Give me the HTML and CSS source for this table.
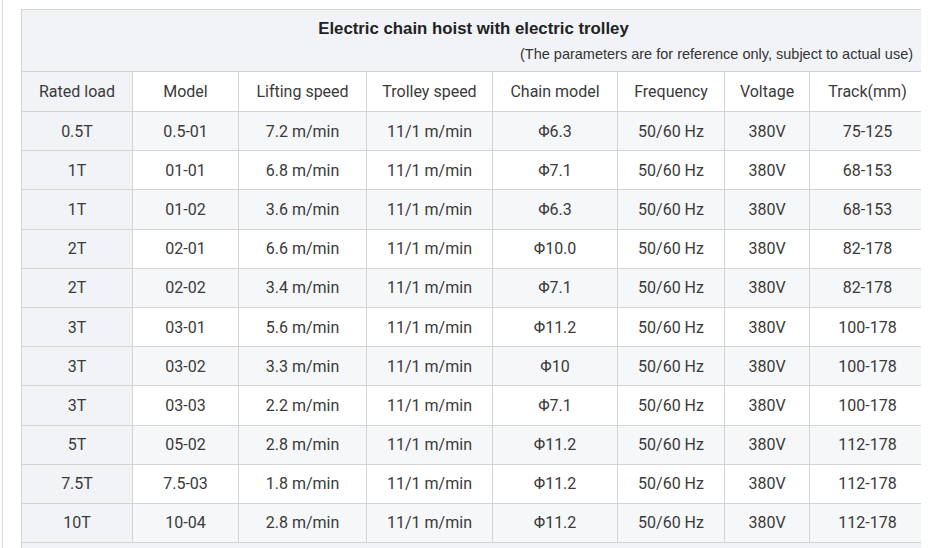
FILE: index.html
```html
<!DOCTYPE html>
<html>
<head>
<meta charset="utf-8">
<link rel="stylesheet" href="styles.css">
</head>
<body>
<div class="frame">
  <div class="clip">
    <table class="spec">
      <colgroup>
        <col class="c1"><col class="c2"><col class="c3"><col class="c4"><col class="c5"><col class="c6"><col class="c7"><col class="c8">
      </colgroup>
      <thead>
        <tr class="title-row">
          <th colspan="8">
            <div class="title">Electric chain hoist with electric trolley</div>
            <div class="subtitle">(The parameters are for reference only, subject to actual use)</div>
          </th>
        </tr>
        <tr class="head-row">
          <th class="first">Rated load</th><td>Model</td><td>Lifting speed</td><td>Trolley speed</td><td>Chain model</td><td>Frequency</td><td>Voltage</td><td>Track(mm)</td>
        </tr>
      </thead>
      <tbody>
        <tr class="odd"><th class="first">0.5T</th><td>0.5-01</td><td>7.2 m/min</td><td>11/1 m/min</td><td>Φ6.3</td><td>50/60 Hz</td><td>380V</td><td>75-125</td></tr>
        <tr><th class="first">1T</th><td>01-01</td><td>6.8 m/min</td><td>11/1 m/min</td><td>Φ7.1</td><td>50/60 Hz</td><td>380V</td><td>68-153</td></tr>
        <tr class="odd"><th class="first">1T</th><td>01-02</td><td>3.6 m/min</td><td>11/1 m/min</td><td>Φ6.3</td><td>50/60 Hz</td><td>380V</td><td>68-153</td></tr>
        <tr><th class="first">2T</th><td>02-01</td><td>6.6 m/min</td><td>11/1 m/min</td><td>Φ10.0</td><td>50/60 Hz</td><td>380V</td><td>82-178</td></tr>
        <tr class="odd"><th class="first">2T</th><td>02-02</td><td>3.4 m/min</td><td>11/1 m/min</td><td>Φ7.1</td><td>50/60 Hz</td><td>380V</td><td>82-178</td></tr>
        <tr><th class="first">3T</th><td>03-01</td><td>5.6 m/min</td><td>11/1 m/min</td><td>Φ11.2</td><td>50/60 Hz</td><td>380V</td><td>100-178</td></tr>
        <tr class="odd"><th class="first">3T</th><td>03-02</td><td>3.3 m/min</td><td>11/1 m/min</td><td>Φ10</td><td>50/60 Hz</td><td>380V</td><td>100-178</td></tr>
        <tr><th class="first">3T</th><td>03-03</td><td>2.2 m/min</td><td>11/1 m/min</td><td>Φ7.1</td><td>50/60 Hz</td><td>380V</td><td>100-178</td></tr>
        <tr class="odd"><th class="first">5T</th><td>05-02</td><td>2.8 m/min</td><td>11/1 m/min</td><td>Φ11.2</td><td>50/60 Hz</td><td>380V</td><td>112-178</td></tr>
        <tr><th class="first">7.5T</th><td>7.5-03</td><td>1.8 m/min</td><td>11/1 m/min</td><td>Φ11.2</td><td>50/60 Hz</td><td>380V</td><td>112-178</td></tr>
        <tr class="odd"><th class="first">10T</th><td>10-04</td><td>2.8 m/min</td><td>11/1 m/min</td><td>Φ11.2</td><td>50/60 Hz</td><td>380V</td><td>112-178</td></tr>
        <tr class="foot"><td colspan="8"></td></tr>
      </tbody>
    </table>
  </div>
</div>
</body>
</html>
```

FILE: styles.css
```css
html, body {
  margin: 0;
  padding: 0;
  background: #ffffff;
  overflow: hidden;
}
.frame {
  margin-left: 2px;
  border-left: 1px solid #dcdcdc;
  height: 548px;
  box-sizing: border-box;
  padding: 9px 0 0 18px;
}
.clip {
  width: 900px;
  overflow: hidden;
}
.spec {
  width: 904px;
  table-layout: fixed;
  border-collapse: collapse;
  font-family: Roboto, "Liberation Sans", sans-serif;
  font-size: 16px;
  color: #3a3a3a;
}
.c1 { width: 111px; }
.c2 { width: 106px; }
.c3 { width: 128px; }
.c4 { width: 126px; }
.c5 { width: 125px; }
.c6 { width: 107px; }
.c7 { width: 85px; }
.c8 { width: 116px; }
.spec th, .spec td {
  border: 1px solid #d4d4d4;
  text-align: center;
  font-weight: normal;
  padding: 0;
}
.title-row th {
  background: #f2f3f7;
  height: 61px;
  padding: 0 12px 0 12px;
  vertical-align: top;
  font-family: "Liberation Sans", Arial, sans-serif;
}
.title {
  font-weight: bold;
  font-size: 16.8px;
  color: #222222;
  line-height: 20px;
  padding-top: 9px;
}
.subtitle {
  text-align: right;
  font-size: 14.5px;
  color: #333333;
  line-height: 18px;
  padding-top: 6px;
}
.head-row th, .head-row td {
  height: 39px;
}
tbody tr th, tbody tr td {
  height: 38.2px;
}
.first {
  background: #f2f3f6;
}
tr.odd td {
  background: #f6f7f9;
}
tr.foot td {
  background: #f2f3f6;
  height: 20px;
}
```
